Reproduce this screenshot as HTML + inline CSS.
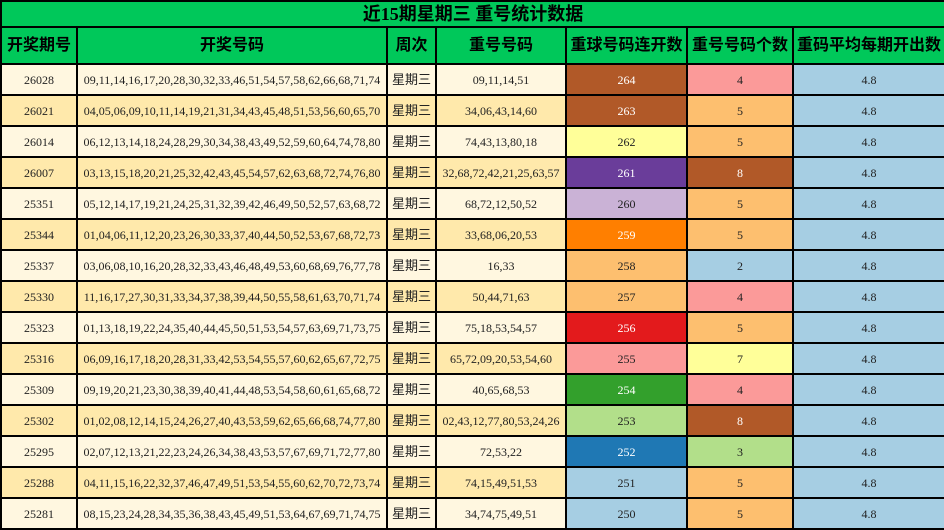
<!DOCTYPE html>
<html><head><meta charset="utf-8"><style>
html,body{margin:0;padding:0;background:#fff;overflow:hidden;}
table{border-collapse:collapse;table-layout:fixed;width:944px;}
td,th{border:2px solid #000;padding:0;text-align:center;font-family:"Liberation Serif","Noto Serif CJK SC","Noto Sans CJK SC",serif;font-size:12px;color:#222;white-space:nowrap;overflow:hidden;line-height:14px;}
th{background:#00c85a;font-family:"Liberation Serif","Noto Sans CJK SC",sans-serif;font-weight:bold;font-size:16px;color:#000;line-height:18px;}
.t th{font-size:18px;line-height:20px;}
tr.a td{background:#fff7e0;}
tr.b td{background:#ffe9ab;}
td.w{color:#fff;}
td.wk{font-family:"Liberation Sans","Noto Sans CJK SC",sans-serif;font-size:13px;}
</style></head><body>
<table>
<colgroup><col style="width:76px"><col style="width:310px"><col style="width:49px"><col style="width:130px"><col style="width:121px"><col style="width:106px"><col style="width:152px"></colgroup>
<tr class="t" style="height:26px"><th colspan="7">近15期星期三 重号统计数据</th></tr>
<tr style="height:37px"><th>开奖期号</th><th>开奖号码</th><th>周次</th><th>重号号码</th><th>重球号码连开数</th><th>重号号码个数</th><th>重码平均每期开出数</th></tr>
<tr class="a" style="height:31px"><td>26028</td><td>09,11,14,16,17,20,28,30,32,33,46,51,54,57,58,62,66,68,71,74</td><td class="wk">星期三</td><td>09,11,14,51</td><td class="w" style="background:#b15928">264</td><td style="background:#fb9a99">4</td><td style="background:#a6cee3">4.8</td></tr>
<tr class="b" style="height:31px"><td>26021</td><td>04,05,06,09,10,11,14,19,21,31,34,43,45,48,51,53,56,60,65,70</td><td class="wk">星期三</td><td>34,06,43,14,60</td><td class="w" style="background:#b15928">263</td><td style="background:#fdbf6f">5</td><td style="background:#a6cee3">4.8</td></tr>
<tr class="a" style="height:31px"><td>26014</td><td>06,12,13,14,18,24,28,29,30,34,38,43,49,52,59,60,64,74,78,80</td><td class="wk">星期三</td><td>74,43,13,80,18</td><td style="background:#ffff99">262</td><td style="background:#fdbf6f">5</td><td style="background:#a6cee3">4.8</td></tr>
<tr class="b" style="height:31px"><td>26007</td><td>03,13,15,18,20,21,25,32,42,43,45,54,57,62,63,68,72,74,76,80</td><td class="wk">星期三</td><td>32,68,72,42,21,25,63,57</td><td class="w" style="background:#6a3d9a">261</td><td class="w" style="background:#b15928">8</td><td style="background:#a6cee3">4.8</td></tr>
<tr class="a" style="height:31px"><td>25351</td><td>05,12,14,17,19,21,24,25,31,32,39,42,46,49,50,52,57,63,68,72</td><td class="wk">星期三</td><td>68,72,12,50,52</td><td style="background:#cab2d6">260</td><td style="background:#fdbf6f">5</td><td style="background:#a6cee3">4.8</td></tr>
<tr class="b" style="height:31px"><td>25344</td><td>01,04,06,11,12,20,23,26,30,33,37,40,44,50,52,53,67,68,72,73</td><td class="wk">星期三</td><td>33,68,06,20,53</td><td class="w" style="background:#ff7f00">259</td><td style="background:#fdbf6f">5</td><td style="background:#a6cee3">4.8</td></tr>
<tr class="a" style="height:31px"><td>25337</td><td>03,06,08,10,16,20,28,32,33,43,46,48,49,53,60,68,69,76,77,78</td><td class="wk">星期三</td><td>16,33</td><td style="background:#fdbf6f">258</td><td style="background:#a6cee3">2</td><td style="background:#a6cee3">4.8</td></tr>
<tr class="b" style="height:31px"><td>25330</td><td>11,16,17,27,30,31,33,34,37,38,39,44,50,55,58,61,63,70,71,74</td><td class="wk">星期三</td><td>50,44,71,63</td><td style="background:#fdbf6f">257</td><td style="background:#fb9a99">4</td><td style="background:#a6cee3">4.8</td></tr>
<tr class="a" style="height:31px"><td>25323</td><td>01,13,18,19,22,24,35,40,44,45,50,51,53,54,57,63,69,71,73,75</td><td class="wk">星期三</td><td>75,18,53,54,57</td><td class="w" style="background:#e31a1c">256</td><td style="background:#fdbf6f">5</td><td style="background:#a6cee3">4.8</td></tr>
<tr class="b" style="height:31px"><td>25316</td><td>06,09,16,17,18,20,28,31,33,42,53,54,55,57,60,62,65,67,72,75</td><td class="wk">星期三</td><td>65,72,09,20,53,54,60</td><td style="background:#fb9a99">255</td><td style="background:#ffff99">7</td><td style="background:#a6cee3">4.8</td></tr>
<tr class="a" style="height:31px"><td>25309</td><td>09,19,20,21,23,30,38,39,40,41,44,48,53,54,58,60,61,65,68,72</td><td class="wk">星期三</td><td>40,65,68,53</td><td class="w" style="background:#33a02c">254</td><td style="background:#fb9a99">4</td><td style="background:#a6cee3">4.8</td></tr>
<tr class="b" style="height:31px"><td>25302</td><td>01,02,08,12,14,15,24,26,27,40,43,53,59,62,65,66,68,74,77,80</td><td class="wk">星期三</td><td>02,43,12,77,80,53,24,26</td><td style="background:#b2df8a">253</td><td class="w" style="background:#b15928">8</td><td style="background:#a6cee3">4.8</td></tr>
<tr class="a" style="height:31px"><td>25295</td><td>02,07,12,13,21,22,23,24,26,34,38,43,53,57,67,69,71,72,77,80</td><td class="wk">星期三</td><td>72,53,22</td><td class="w" style="background:#1f78b4">252</td><td style="background:#b2df8a">3</td><td style="background:#a6cee3">4.8</td></tr>
<tr class="b" style="height:31px"><td>25288</td><td>04,11,15,16,22,32,37,46,47,49,51,53,54,55,60,62,70,72,73,74</td><td class="wk">星期三</td><td>74,15,49,51,53</td><td style="background:#a6cee3">251</td><td style="background:#fdbf6f">5</td><td style="background:#a6cee3">4.8</td></tr>
<tr class="a" style="height:31px"><td>25281</td><td>08,15,23,24,28,34,35,36,38,43,45,49,51,53,64,67,69,71,74,75</td><td class="wk">星期三</td><td>34,74,75,49,51</td><td style="background:#a6cee3">250</td><td style="background:#fdbf6f">5</td><td style="background:#a6cee3">4.8</td></tr>
</table>
</body></html>
